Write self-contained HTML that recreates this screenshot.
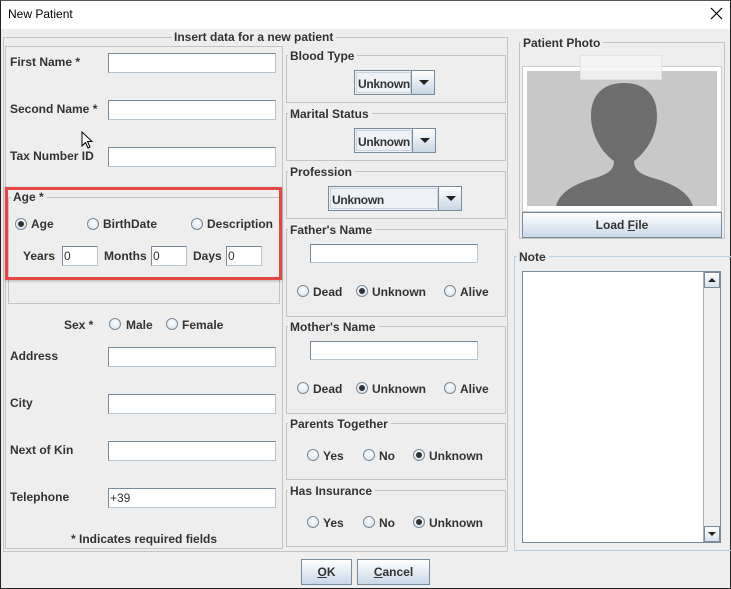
<!DOCTYPE html>
<html><head><meta charset="utf-8"><style>
*{box-sizing:border-box;margin:0;padding:0}
body{width:731px;height:589px;overflow:hidden;background:#eee;font:bold 12px "Liberation Sans",Arial,sans-serif;color:#333;position:relative}
.a{position:absolute}
.win{left:0;top:0;width:731px;height:589px;border:1px solid #222;border-top-color:#555}
.tb{left:1px;top:1px;width:729px;height:28px;background:#fff}
.grp{position:absolute;border:1px solid #c4c4c4}
.gt{position:absolute;background:#eee;padding:0 3px 0 2px;line-height:14px;white-space:nowrap}
.t{position:absolute;white-space:nowrap;line-height:14px}
.in{position:absolute;background:#fff;border:1px solid #7a8a99;border-right-color:#b8c4ce;border-bottom-color:#b8c4ce;height:20px;font:12px "Liberation Sans",sans-serif;color:#333;padding:3px 1px;line-height:13px}
.r{position:absolute;width:12px;height:12px;border-radius:50%;border:1px solid #7a8a99;background:radial-gradient(circle at 50% 35%,#fff,#d8e2ec)}
.r.on::after{content:"";position:absolute;left:2px;top:2px;width:6px;height:6px;border-radius:50%;background:#333}
.cb{position:absolute;height:25px;border:1px solid #7a8a99;background:#eef2f6;}
.cb .v{position:absolute;left:1px;top:1px;bottom:1px;border:1px solid #c8d4e0;padding:4px 0 0 1px;line-height:14px;letter-spacing:-0.3px;overflow:hidden;white-space:nowrap}
.cb .ar{position:absolute;right:0;top:0;bottom:0;width:23px;border-left:1px solid #7a8a99;background:linear-gradient(#fff,#c8d6e4)}
.cb .ar::after{content:"";position:absolute;left:7px;top:9px;border:5px solid transparent;border-top:5px solid #222;border-bottom:0}
.btn{position:absolute;border:1px solid #7a8a99;background:linear-gradient(#fff,#c8d8e8);text-align:center;line-height:25px}
</style></head><body>
<div class="a win"></div>
<div class="a tb"></div>
<div class="t" style="left:8px;top:7px;font-weight:normal;color:#000">New Patient</div>
<svg class="a" style="left:710px;top:7px" width="13" height="13"><path d="M1 1L12 12M12 1L1 12" stroke="#000" stroke-width="1.2"/></svg>

<div class="grp" style="left:3px;top:37px;width:505px;height:515px"></div>
<div class="gt" style="left:172px;top:30px">Insert data for a new patient</div>

<div class="grp" style="left:5px;top:46px;width:278px;height:503px"></div>
<div class="t" style="left:10px;top:55px">First Name *</div><div class="in" style="left:108px;top:53px;width:168px"></div>
<div class="t" style="left:10px;top:102px">Second Name *</div><div class="in" style="left:108px;top:100px;width:168px"></div>
<div class="t" style="left:10px;top:149px">Tax Number ID</div><div class="in" style="left:108px;top:147px;width:168px"></div>
<svg class="a" style="left:81px;top:131px" width="14" height="20"><path d="M1 1L1 15L4.5 11.5L7 17L9 16L6.5 10.5L11 10.5Z" fill="#fff" stroke="#000" stroke-width="1"/></svg>

<div class="grp" style="left:8px;top:197px;width:272px;height:107px"></div>
<div class="gt" style="left:11px;top:190px">Age *</div>
<div class="r on" style="left:15px;top:218px"></div><div class="t" style="left:31px;top:217px">Age</div>
<div class="r" style="left:87px;top:218px"></div><div class="t" style="left:103px;top:217px">BirthDate</div>
<div class="r" style="left:191px;top:218px"></div><div class="t" style="left:207px;top:217px">Description</div>
<div class="t" style="left:23px;top:249px">Years</div><div class="in" style="left:62px;top:246px;width:36px">0</div>
<div class="t" style="left:104px;top:249px">Months</div><div class="in" style="left:151px;top:246px;width:36px">0</div>
<div class="t" style="left:193px;top:249px">Days</div><div class="in" style="left:226px;top:246px;width:36px">0</div>
<div class="a" style="left:5px;top:187px;width:277px;height:93px;border:3px solid #e84545;box-shadow:0 1px 3px rgba(0,0,0,.25)"></div>

<div class="t" style="left:64px;top:318px">Sex *</div>
<div class="r" style="left:109px;top:318px"></div><div class="t" style="left:126px;top:318px">Male</div>
<div class="r" style="left:166px;top:318px"></div><div class="t" style="left:182px;top:318px">Female</div>
<div class="t" style="left:10px;top:349px">Address</div><div class="in" style="left:108px;top:347px;width:168px"></div>
<div class="t" style="left:10px;top:396px">City</div><div class="in" style="left:108px;top:394px;width:168px"></div>
<div class="t" style="left:10px;top:443px">Next of Kin</div><div class="in" style="left:108px;top:441px;width:168px"></div>
<div class="t" style="left:10px;top:490px">Telephone</div><div class="in" style="left:108px;top:488px;width:168px">+39</div>
<div class="t" style="left:71px;top:532px">* Indicates required fields</div>

<!-- middle -->
<div class="grp" style="left:286px;top:55px;width:220px;height:48px"></div><div class="gt" style="left:288px;top:49px">Blood Type</div>
<div class="cb" style="left:354px;top:70px;width:81px"><div class="v" style="right:23px">Unknown</div><div class="ar"></div></div>
<div class="grp" style="left:286px;top:113px;width:220px;height:48px"></div><div class="gt" style="left:288px;top:107px">Marital Status</div>
<div class="cb" style="left:354px;top:128px;width:82px"><div class="v" style="right:23px">Unknown</div><div class="ar"></div></div>
<div class="grp" style="left:286px;top:171px;width:220px;height:48px"></div><div class="gt" style="left:288px;top:165px">Profession</div>
<div class="cb" style="left:328px;top:186px;width:134px"><div class="v" style="right:23px">Unknown</div><div class="ar"></div></div>

<div class="grp" style="left:286px;top:229px;width:220px;height:88px"></div><div class="gt" style="left:288px;top:223px">Father's Name</div>
<div class="in" style="left:310px;top:244px;width:168px;height:19px"></div>
<div class="r" style="left:297px;top:285px"></div><div class="t" style="left:313px;top:285px">Dead</div>
<div class="r on" style="left:356px;top:285px"></div><div class="t" style="left:372px;top:285px">Unknown</div>
<div class="r" style="left:444px;top:285px"></div><div class="t" style="left:460px;top:285px">Alive</div>

<div class="grp" style="left:286px;top:326px;width:220px;height:88px"></div><div class="gt" style="left:288px;top:320px">Mother's Name</div>
<div class="in" style="left:310px;top:341px;width:168px;height:19px"></div>
<div class="r" style="left:297px;top:382px"></div><div class="t" style="left:313px;top:382px">Dead</div>
<div class="r on" style="left:356px;top:382px"></div><div class="t" style="left:372px;top:382px">Unknown</div>
<div class="r" style="left:444px;top:382px"></div><div class="t" style="left:460px;top:382px">Alive</div>

<div class="grp" style="left:286px;top:423px;width:220px;height:57px"></div><div class="gt" style="left:288px;top:417px">Parents Together</div>
<div class="r" style="left:307px;top:449px"></div><div class="t" style="left:323px;top:449px">Yes</div>
<div class="r" style="left:363px;top:449px"></div><div class="t" style="left:379px;top:449px">No</div>
<div class="r on" style="left:413px;top:449px"></div><div class="t" style="left:429px;top:449px">Unknown</div>

<div class="grp" style="left:286px;top:490px;width:220px;height:57px"></div><div class="gt" style="left:288px;top:484px">Has Insurance</div>
<div class="r" style="left:307px;top:516px"></div><div class="t" style="left:323px;top:516px">Yes</div>
<div class="r" style="left:363px;top:516px"></div><div class="t" style="left:379px;top:516px">No</div>
<div class="r on" style="left:413px;top:516px"></div><div class="t" style="left:429px;top:516px">Unknown</div>

<!-- right -->
<div class="grp" style="left:519px;top:42px;width:206px;height:197px"></div><div class="gt" style="left:521px;top:36px">Patient Photo</div>
<div class="a" style="left:522px;top:66px;width:200px;height:146px;background:#fff;border:1px solid #ccc"></div>
<div class="a" style="left:527px;top:71px;width:190px;height:135px;background:#c8c8c8;overflow:hidden">
<svg width="190" height="135"><path d="M29 135C33 120 50 112 68 107C82 103 87 98 87 90C73 80 64 62 64 45C64 22 78 12 97 12C116 12 130 22 130 45C130 62 121 80 107 90C107 98 112 103 126 107C144 112 161 120 166 135Z" fill="#6e6e6e"/></svg></div>
<div class="a" style="left:580px;top:55px;width:82px;height:25px;background:rgba(245,245,245,.85);border:1px solid rgba(220,220,220,.7)"></div>
<div class="btn" style="left:522px;top:212px;width:200px;height:26px">Load <u>F</u>ile</div>

<div class="grp" style="left:514px;top:256px;width:220px;height:295px;border-color:#b8cfe5"></div><div class="gt" style="left:517px;top:250px">Note</div>
<div class="a" style="left:522px;top:271px;width:199px;height:272px;background:#fff;border:1px solid #7a8a99"></div>
<div class="a" style="left:703px;top:272px;width:17px;height:270px;background:#eee;border-left:1px solid #aab"></div>
<div class="a" style="left:704px;top:272px;width:16px;height:16px;border:1px solid #7a8a99;background:linear-gradient(#fff,#d8e2ec)"></div>
<div class="a" style="left:708px;top:278px;border:4px solid transparent;border-bottom:4px solid #222;border-top:0"></div>
<div class="a" style="left:704px;top:526px;width:16px;height:16px;border:1px solid #7a8a99;background:linear-gradient(#fff,#d8e2ec)"></div>
<div class="a" style="left:708px;top:532px;border:4px solid transparent;border-top:4px solid #222;border-bottom:0"></div>

<div class="btn" style="left:301px;top:559px;width:51px;height:26px"><u>O</u>K</div>
<div class="btn" style="left:357px;top:559px;width:73px;height:26px"><u>C</u>ancel</div>
</body></html>
